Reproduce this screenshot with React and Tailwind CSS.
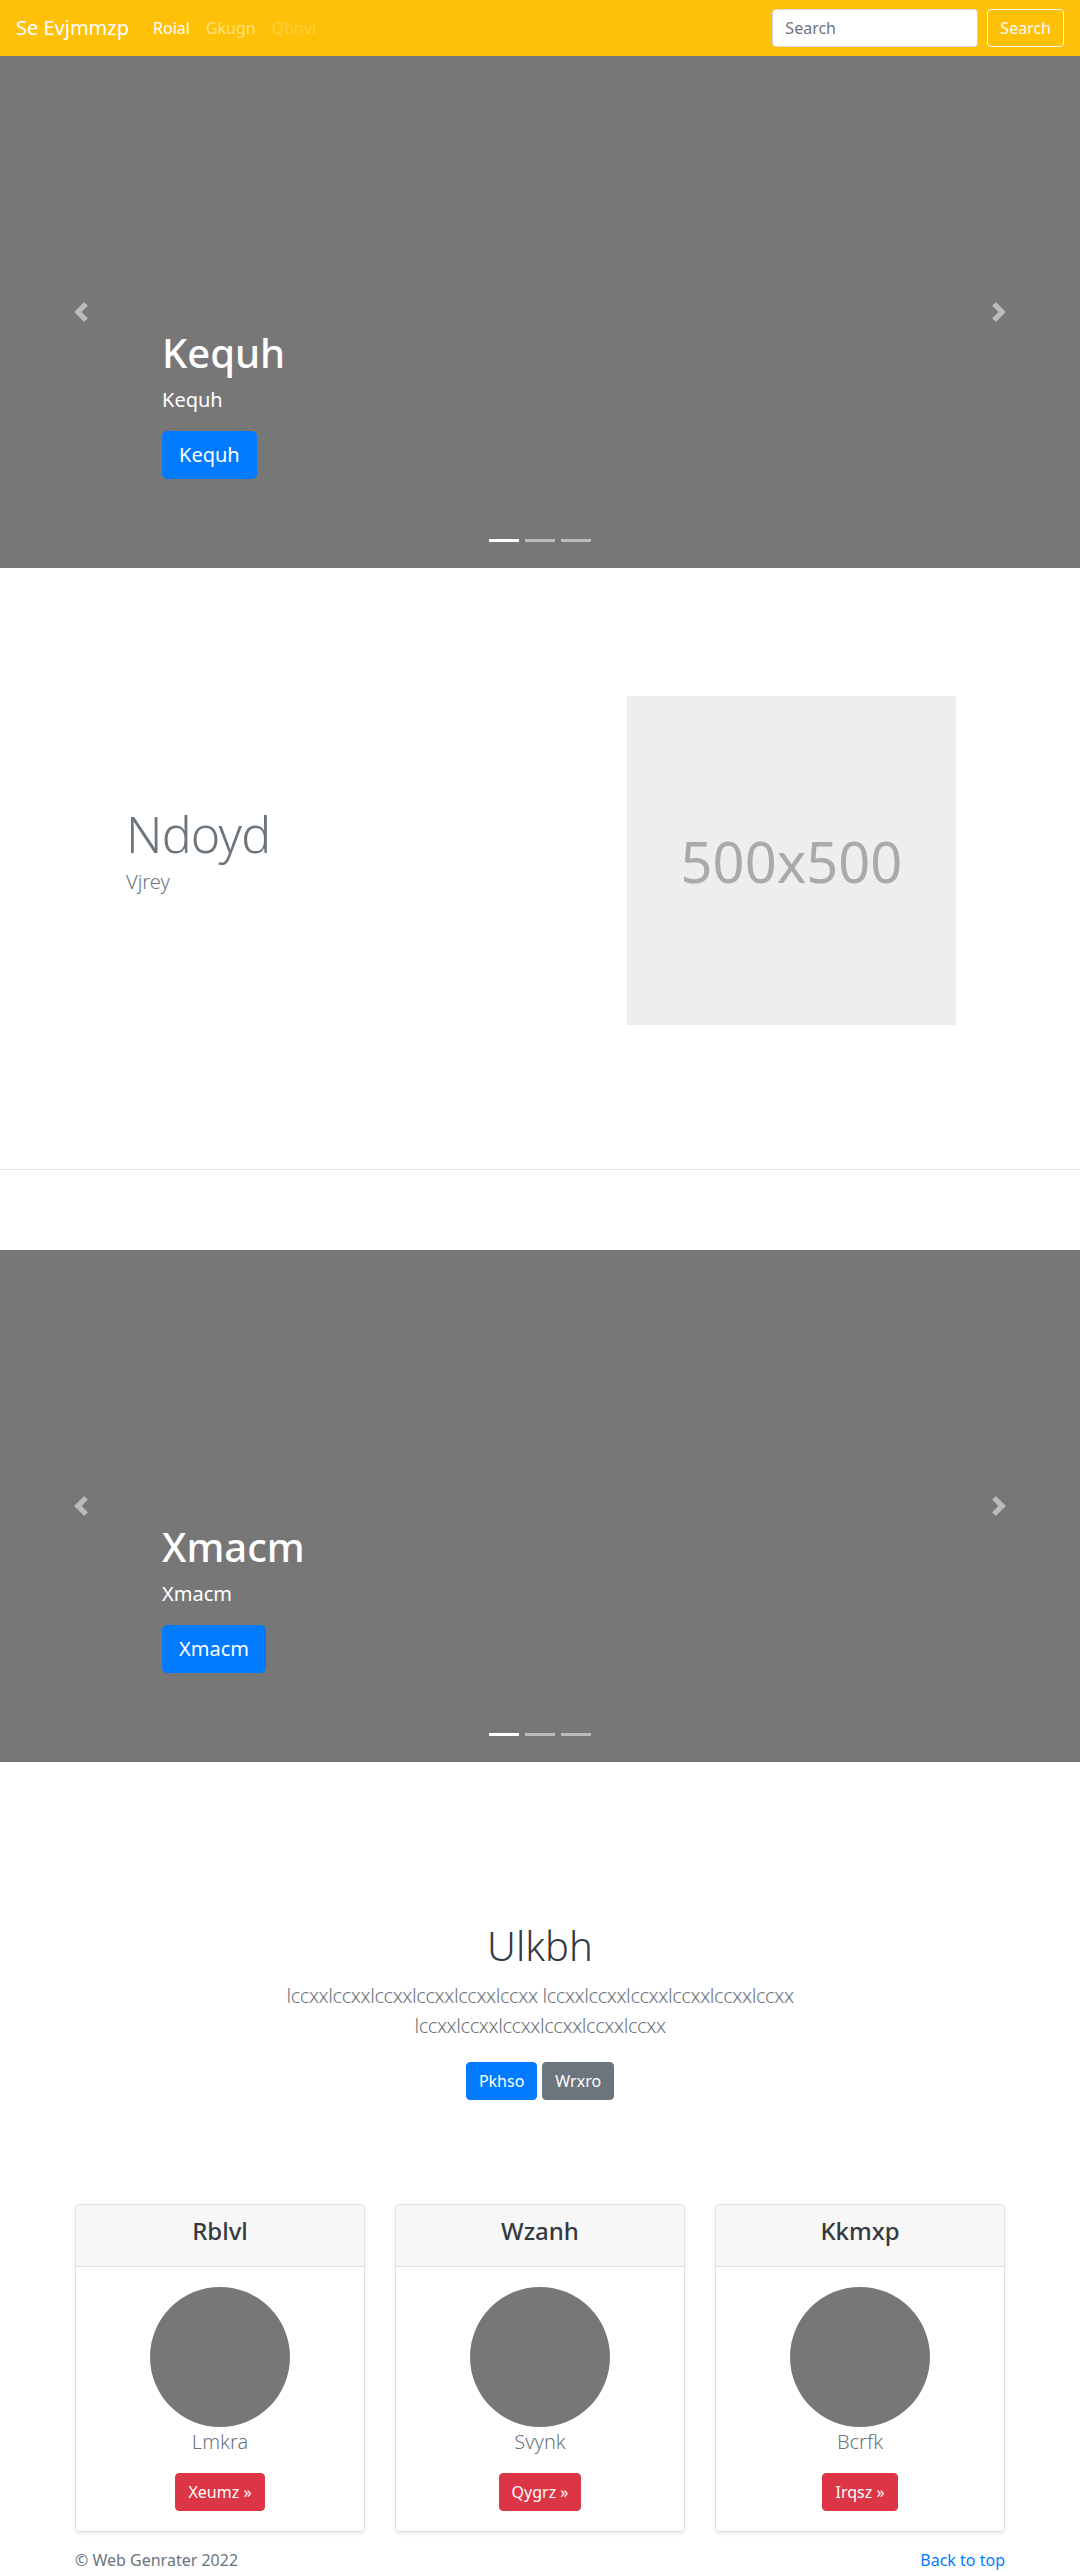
import React from "react";

function PrevIcon() {
  return (
    <svg width="20" height="20" viewBox="0 0 8 8" fill="#fff" className="opacity-50">
      <path d="M5.25 0l-4 4 4 4 1.5-1.5-2.5-2.5 2.5-2.5-1.5-1.5z" />
    </svg>
  );
}
function NextIcon() {
  return (
    <svg width="20" height="20" viewBox="0 0 8 8" fill="#fff" className="opacity-50">
      <path d="M2.75 0l-1.5 1.5 2.5 2.5-2.5 2.5 1.5 1.5 4-4-4-4z" />
    </svg>
  );
}

function Carousel({ label }) {
  return (
    <div className="relative h-[512px] bg-[#777777] overflow-hidden">
      <div className="flex h-full flex-col justify-end pl-[162px] pb-[89px] text-white">
        <h1 className="text-[40px] leading-[1.2] font-medium mb-2">{label}</h1>
        <p className="text-[20px] leading-[30px] mb-[13px]">{label}</p>
        <div className="mt-[3px]">
          <a className="inline-block bg-[#007bff] text-white text-[20px] leading-[30px] px-4 py-2 rounded-[5px] border border-[#007bff]">
            {label}
          </a>
        </div>
      </div>
      <div className="absolute left-0 top-0 bottom-0 w-[15%] flex items-center justify-center">
        <PrevIcon />
      </div>
      <div className="absolute right-0 top-0 bottom-0 w-[15%] flex items-center justify-center">
        <NextIcon />
      </div>
      <div className="absolute bottom-[26px] left-1/2 -translate-x-1/2 flex gap-[6px]">
        <span className="block w-[30px] h-[3px] bg-white" />
        <span className="block w-[30px] h-[3px] bg-white/50" />
        <span className="block w-[30px] h-[3px] bg-white/50" />
      </div>
    </div>
  );
}

function Card({ title, name, btn }) {
  return (
    <div className="border border-[#dfdfdf] rounded-[4px] shadow-[0_2px_4px_rgba(0,0,0,0.075)] bg-white text-center overflow-hidden">
      <div className="bg-[#f7f7f7] border-b border-[#dfdfdf] px-5 py-3">
        <h4 className="text-[24px] leading-[1.2] font-medium text-[#343a40] mb-2">{title}</h4>
      </div>
      <div className="p-5">
        <div className="mx-auto w-[140px] h-[140px] rounded-full bg-[#777777]" />
        <p className="text-[20px] leading-[30px] font-light text-[#6c757d] mb-4">{name}</p>
        <a className="inline-block bg-[#dc3545] text-white text-[16px] leading-[24px] px-3 py-[6px] rounded-[4px] border border-[#dc3545]">
          {btn} »
        </a>
      </div>
    </div>
  );
}

export default function App() {
  return (
    <div className="bg-white text-[#212529] font-['Noto_Sans','Open_Sans',sans-serif] text-[16px] leading-[24px]">
      <nav className="h-14 bg-[#ffc107] flex items-center justify-between px-4">
        <div className="flex items-center">
          <a className="text-[20px] leading-[30px] text-white mr-4">Se Evjmmzp</a>
          <div className="flex">
            <a className="px-2 py-2 text-white">Roial</a>
            <a className="px-2 py-2 text-white/50">Gkugn</a>
            <a className="px-2 py-2 text-white/25">Qbhvi</a>
          </div>
        </div>
        <div className="flex items-center">
          <input
            className="w-[206px] h-[38px] rounded-[4px] border border-[#ced4da] bg-white px-3 text-[16px] text-[#495057] placeholder:text-[#6c757d] outline-none"
            placeholder="Search"
          />
          <button className="ml-[9px] h-[38px] px-3 border border-[#f8f9fa] rounded-[4px] text-[#f8f9fa] text-[16px]">
            Search
          </button>
        </div>
      </nav>

      <Carousel label="Kequh" />

      <section className="pt-[128px] pb-[144px]">
        <div className="w-[930px] mx-auto flex items-center">
          <div className="flex-1 pl-[51px]">
            <h2 className="text-[50px] leading-none font-light tracking-[-0.8px] text-[#6c757d] mb-2">Ndoyd</h2>
            <p className="text-[20px] leading-[30px] font-light text-[#6c757d] mb-4">Vjrey</p>
          </div>
          <div className="w-[329px] h-[329px] bg-[#eeeeee] flex items-center justify-center mr-[49px]">
            <span className="text-[56px] text-[#aaaaaa]">500x500</span>
          </div>
        </div>
      </section>

      <div className="h-px bg-[#e5e5e5]" />

      <div className="mt-[80px]">
        <Carousel label="Xmacm" />
      </div>

      <section className="pt-[160px] text-center">
        <h1 className="text-[40px] leading-[1.2] font-light text-[#343a40] mb-[11px]">Ulkbh</h1>
        <p className="mx-auto max-w-[600px] text-[20px] leading-[30px] font-light tracking-[-0.4px] text-[#6c757d] mb-[21px]">
          lccxxlccxxlccxxlccxxlccxxlccxx lccxxlccxxlccxxlccxxlccxxlccxx lccxxlccxxlccxxlccxxlccxxlccxx
        </p>
        <div className="flex justify-center gap-[5px]">
          <a className="inline-block bg-[#007bff] text-white px-3 py-[6px] rounded-[4px] border border-[#007bff]">Pkhso</a>
          <a className="inline-block bg-[#6c757d] text-white px-3 py-[6px] rounded-[4px] border border-[#6c757d]">Wrxro</a>
        </div>
      </section>

      <section className="pt-[104px]">
        <div className="w-[930px] mx-auto grid grid-cols-3 gap-[30px]">
          <Card title="Rblvl" name="Lmkra" btn="Xeumz" />
          <Card title="Wzanh" name="Svynk" btn="Qygrz" />
          <Card title="Kkmxp" name="Bcrfk" btn="Irqsz" />
        </div>
      </section>

      <footer className="w-[930px] mx-auto mt-4 flex justify-between text-[#6c757d]">
        <p>© Web Genrater 2022</p>
        <a className="text-[#007bff]">Back to top</a>
      </footer>
    </div>
  );
}
